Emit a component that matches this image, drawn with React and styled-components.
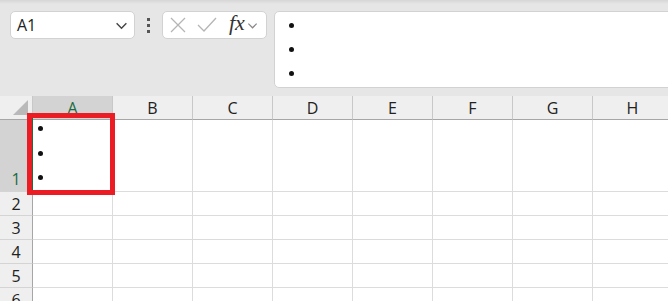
import React from 'react';
import styled, { createGlobalStyle } from 'styled-components';

const Global = createGlobalStyle`
  html, body { margin: 0; padding: 0; background: #fff; overflow: hidden; }
  body { font-family: "Open Sans", "Noto Sans", sans-serif; }
`

const Page = styled.div`
  width: 668px;
  height: 301px;
  overflow: hidden;
  display: flex;
  flex-direction: column;
`

const Toolbar = styled.div`
  height: 96px;
  flex: none;
  box-sizing: border-box;
  background: linear-gradient(#d6d6d6 0, #e6e6e6 4px, #e7e6e7 100%);
  display: flex;
  align-items: flex-start;
  padding: 11px 0 0 10px;
`

const Box = styled.div`
  box-sizing: border-box;
  background: #fff;
  border: 1px solid #d2d2d2;
  border-radius: 5px;
  height: ${p => p.$h || 28}px;
  width: ${p => p.$w}px;
  display: flex;
  align-items: center;
  flex: none;
`

const NameText = styled.span`
  font-size: 16px;
  color: #222;
  padding-left: 6px;
  flex: 1;
`

const Dots = styled.div`
  width: 27px;
  height: 28px;
  display: flex;
  flex-direction: column;
  align-items: center;
  justify-content: center;
  gap: 3px;
  flex: none;
  span {
    width: 3px;
    height: 3px;
    background: #555;
  }
`

const Fx = styled.span`
  font-family: "Liberation Serif", "DejaVu Serif", serif;
  font-style: italic;
  font-size: 22px;
  color: #333;
  margin-left: 12px;
  line-height: 1;
  margin-top: -4px;
`

const FormulaBar = styled(Box)`
  margin-left: 7px;
  flex-direction: column;
  align-items: flex-start;
  justify-content: flex-start;
  padding: 0 0 0 14px;
`

const Bullet = styled.span`
  display: block;
  width: 5px;
  height: 5px;
  border-radius: 50%;
  background: #111;
  margin-top: ${p => p.$mt}px;
`

const Grid = styled.div`
  display: grid;
  grid-template-columns: 33px repeat(8, 80px);
  grid-template-rows: 24px 72px repeat(5, 24px);
  background: #fff;
`

const Corner = styled.div`
  background: #efefef;
  border-right: 1px solid #c8c8c8;
  border-bottom: 1px solid #a6a6a6;
  box-sizing: border-box;
  position: relative;
  &::after {
    content: '';
    position: absolute;
    right: 4px;
    bottom: 4px;
    width: 0;
    height: 0;
    border-left: 15px solid transparent;
    border-bottom: 15px solid #b9b9b9;
  }
`

const ColHead = styled.div`
  box-sizing: border-box;
  background: ${p => (p.$sel ? '#d3d3d3' : '#efefef')};
  border-right: 1px solid #c8c8c8;
  border-bottom: 1px solid #a6a6a6;
  color: ${p => (p.$sel ? '#1d6b3f' : '#222')};
  font-size: 16px;
  display: flex;
  align-items: center;
  justify-content: center;
  padding-top: 1px;
`

const RowHead = styled.div`
  box-sizing: border-box;
  background: ${p => (p.$sel ? '#d3d3d3' : '#efefef')};
  border-right: 1px solid #a6a6a6;
  border-bottom: 1px solid #d4d4d4;
  color: ${p => (p.$sel ? '#1d6b3f' : '#222')};
  font-size: 16px;
  display: flex;
  align-items: ${p => (p.$sel ? 'flex-end' : 'center')};
  justify-content: center;
  padding-bottom: ${p => (p.$sel ? '1px' : '0')};
`

const Cell = styled.div`
  box-sizing: border-box;
  border-right: 1px solid #dcdcdc;
  border-bottom: 1px solid #dcdcdc;
  position: relative;
`

const ActiveCell = styled(Cell)`
  display: flex;
  flex-direction: column;
  padding-left: 5px;
  z-index: 2;
`

const RedFrame = styled.div`
  position: absolute;
  left: -6px;
  top: -7px;
  width: 88px;
  height: 82px;
  box-sizing: border-box;
  border: 5px solid #ec1c24;
  pointer-events: none;
  &::before {
    content: '';
    position: absolute;
    left: 0;
    top: 0;
    bottom: 0;
    width: 1px;
    background: #1d6b3f;
  }
`

const cols = ['A', 'B', 'C', 'D', 'E', 'F', 'G', 'H'];
const rows = [1, 2, 3, 4, 5, 6];

function Chevron({ x = 0, size = 12, color = '#444' }) {
  return (
    <svg width={size} height={size} viewBox="0 0 12 12" style={{ marginLeft: x, flex: 'none' }}>
      <polyline points="1.5,4 6,8.5 10.5,4" fill="none" stroke={color} strokeWidth="1.3" />
    </svg>
  );
}

export default function App() {
  return (
    <Page>
      <Global />
      <Toolbar>
        <Box $w={125}>
          <NameText>A1</NameText>
          <Chevron size={13} />
          <span style={{ width: 6 }} />
        </Box>
        <Dots><span /><span /><span /></Dots>
        <Box $w={105}>
          <svg width="18" height="18" viewBox="0 0 18 18" style={{ marginLeft: 6 }}>
            <path d="M2 2 L16 16 M16 2 L2 16" stroke="#b5b5b5" strokeWidth="1.3" fill="none" />
          </svg>
          <svg width="20" height="18" viewBox="0 0 20 18" style={{ marginLeft: 10 }}>
            <polyline points="1,9 7,15 19,2" stroke="#b5b5b5" strokeWidth="1.3" fill="none" />
          </svg>
          <Fx>fx</Fx>
          <Chevron x={2} size={11} color="#888" />
        </Box>
        <FormulaBar $w={410} $h={77}>
          <Bullet $mt={11} />
          <Bullet $mt={19} />
          <Bullet $mt={19} />
        </FormulaBar>
      </Toolbar>
      <Grid>
        <Corner />
        {cols.map(c => (
          <ColHead key={c} $sel={c === 'A'}>{c}</ColHead>
        ))}
        {rows.map(r => (
          <React.Fragment key={r}>
            <RowHead $sel={r === 1}>{r}</RowHead>
            {cols.map(c =>
              r === 1 && c === 'A' ? (
                <ActiveCell key={c}>
                  <Bullet $mt={6} />
                  <Bullet $mt={20} />
                  <Bullet $mt={19} />
                  <RedFrame />
                </ActiveCell>
              ) : (
                <Cell key={c} />
              )
            )}
          </React.Fragment>
        ))}
      </Grid>
    </Page>
  );
}
